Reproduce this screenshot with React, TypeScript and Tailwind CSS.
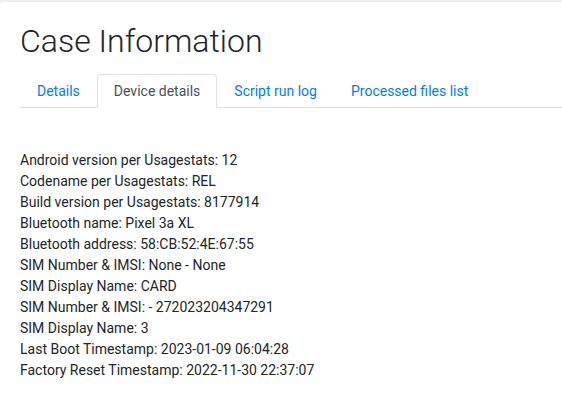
const tabs = ["Details", "Device details", "Script run log", "Processed files list"];

const rows = [
  "Android version per Usagestats: 12",
  "Codename per Usagestats: REL",
  "Build version per Usagestats: 8177914",
  "Bluetooth name: Pixel 3a XL",
  "Bluetooth address: 58:CB:52:4E:67:55",
  "SIM Number & IMSI: None - None",
  "SIM Display Name: CARD",
  "SIM Number & IMSI: - 272023204347291",
  "SIM Display Name: 3",
  "Last Boot Timestamp: 2023-01-09 06:04:28",
  "Factory Reset Timestamp: 2022-11-30 22:37:07",
];

export default function App() {
  const active = 1;

  return (
    <div className="min-h-screen bg-[#efefef] pt-[2px] font-['Roboto',sans-serif]">
      <div className="min-h-[397px] bg-white rounded-tl-[4px] pl-5">
        <h1 className="pt-5 text-[32px] leading-[38px] font-light text-[#212529]">
          Case Information
        </h1>
        <ul className="mt-[14px] flex border-b border-[#dee2e6] text-sm leading-5">
          {tabs.map((t, i) => (
            <li key={t} className="-mb-px">
              <a
                href="#"
                className={
                  i === active
                    ? "block rounded-t-[4px] border border-[#dee2e6] border-b-white bg-white px-4 py-[6px] text-[#495057]"
                    : "block border border-transparent px-4 py-[6px] text-[#007bff]"
                }
              >
                {t}
              </a>
            </li>
          ))}
        </ul>
        <div className="pt-[42px] text-sm leading-[21px] text-[#212529]">
          {rows.map((r, i) => (
            <div key={i}>{r}</div>
          ))}
        </div>
      </div>
    </div>
  );
}
